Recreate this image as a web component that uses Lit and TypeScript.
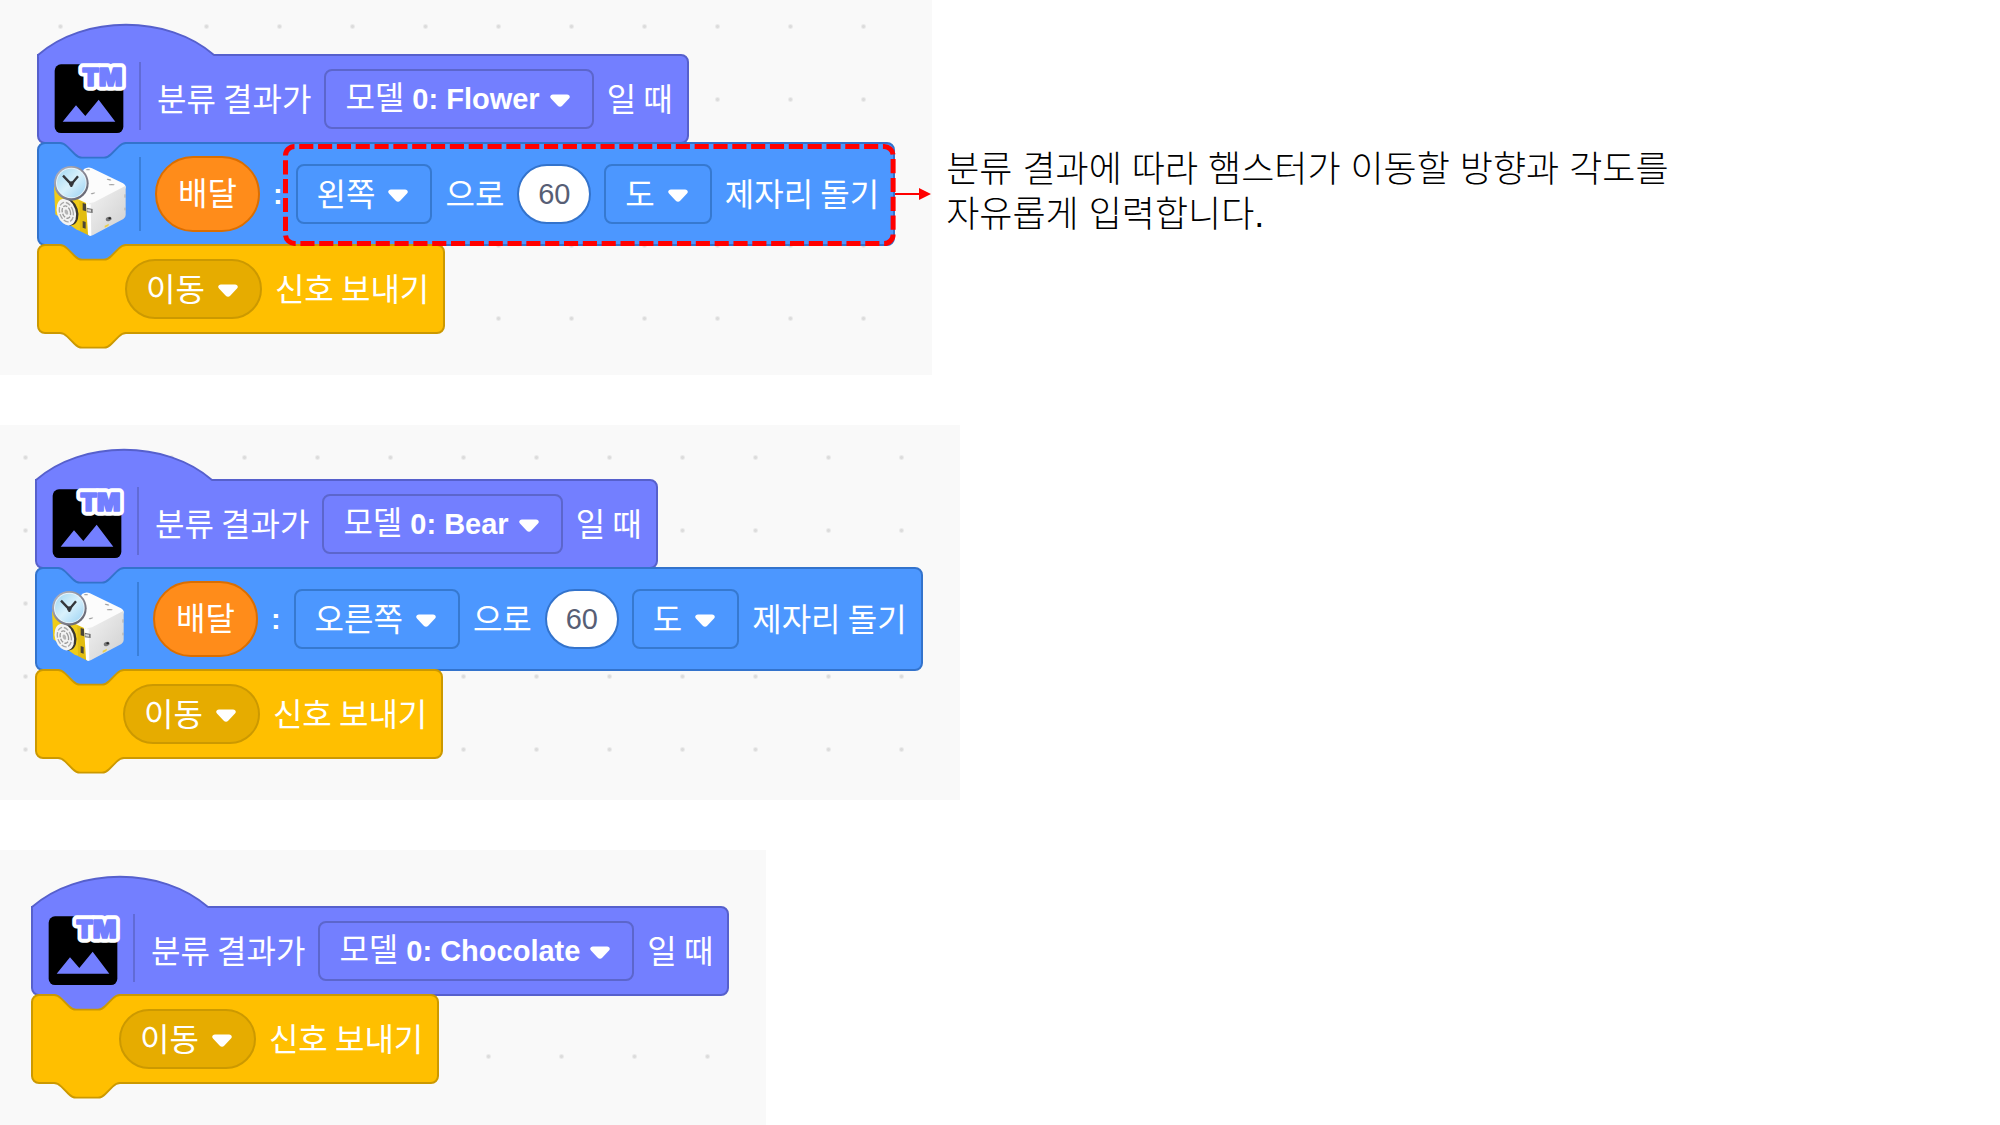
import { LitElement, html, css, nothing, TemplateResult } from "lit";
import { customElement, property, state } from "lit/decorators.js";
import { classMap } from "lit/directives/class-map.js";
import { styleMap } from "lit/directives/style-map.js";

type Tone = "model" | "motion" | "event";

interface Script {
  model: string;
  turn?: string;
  highlighted?: boolean;
  insetLeft: number;
  insetTop: number;
  gridX: number;
  gridY: number;
}

const MODELS = ["Flower", "Bear", "Chocolate"];

const SCRIPTS: Script[] = [
  { model: "Flower", turn: "왼쪽", highlighted: true, insetLeft: 37, insetTop: 54, gridX: 24, gridY: 63 },
  { model: "Bear", turn: "오른쪽", insetLeft: 35, insetTop: 54, gridX: 62, gridY: 69 },
  { model: "Chocolate", insetLeft: 31, insetTop: 56, gridX: 14, gridY: 24 },
];

const CONNECTOR =
  "M12,0 c2,0 3,1 4,2 l4,4 c1,1 2,2 4,2 h12 c2,0 3,-1 4,-2 l4,-4 c1,-1 2,-2 4,-2";

const caret = html`<svg class="caret" viewBox="0 0 20 13" aria-hidden="true">
  <path d="M3,0.5 H17 C19.6,0.5 20.6,2.8 19,4.6 L12.2,11.8 C10.9,13.1 9.1,13.1 7.8,11.8 L1,4.6 C-0.6,2.8 0.4,0.5 3,0.5Z" fill="#fff" />
</svg>`;

const modelIcon = html`<svg class="icon icon-model" viewBox="72 66 216 222" aria-hidden="true">
  <rect x="74" y="73" width="206" height="206" rx="19" fill="#000" />
  <path d="M98,245 L138,196 L166,228 L206,179 L256,245Z" fill="#737fff" />
  <g font-family="Inter, 'Liberation Sans', sans-serif" font-weight="900" font-size="73" stroke-linejoin="round">
    <text x="157" y="137" stroke="#fff" stroke-width="28" fill="#fff">TM</text>
    <text x="157" y="137" fill="#737fff" stroke="#737fff" stroke-width="5">TM</text>
  </g>
</svg>`;

const robotIcon = html`<svg class="icon icon-robot" viewBox="70 330 216 258" aria-hidden="true">
  <defs>
    <linearGradient id="side" x1="0" y1="0" x2="1" y2="1">
      <stop offset="0" stop-color="#f4f4f4" />
      <stop offset="1" stop-color="#cfcfcf" />
    </linearGradient>
    <linearGradient id="rim" x1="0" y1="0" x2="1" y2="1">
      <stop offset="0" stop-color="#b9b9c4" />
      <stop offset="1" stop-color="#5c5c68" />
    </linearGradient>
    <linearGradient id="glass" x1="0" y1="0" x2="1" y2="1">
      <stop offset="0" stop-color="#9fd6f2" />
      <stop offset="0.5" stop-color="#d9f1fc" />
      <stop offset="1" stop-color="#9bd2f3" />
    </linearGradient>
  </defs>
  <path d="M70,436 L166,478 L166,576 L138,566 L74,520Z" fill="#f0cc18" />
  <path d="M146,480 L170,484 L176,584 L148,570Z" fill="#e2bd10" />
  <path d="M160,384 Q172,376 184,382 L277,427 Q286,432 285,442 L188,490 Q176,494 166,486 L120,464Z" fill="#fcfcfc" />
  <path d="M172,490 Q176,486 190,484 L285,434 V522 Q285,530 278,534 L186,583 Q176,587 172,580Z" fill="url(#side)" />
  <path d="M166,484 Q172,492 180,490 L182,584 Q176,586 172,580Z" fill="#fff" />
  <g fill="#a2a2a2">
    <ellipse cx="235" cy="416" rx="7" ry="2" transform="rotate(14 235 416)" />
    <ellipse cx="243" cy="431" rx="9" ry="2" />
    <ellipse cx="187" cy="457" rx="7" ry="2" transform="rotate(-12 187 457)" />
    <ellipse cx="172" cy="386" rx="6" ry="2" />
  </g>
  <path d="M156,486 l10,3 v22 l-10,-3Z M156,540 l9,3 v20 l-9,-3Z" fill="#4a4537" />
  <path d="M168,500 l18,4 v12 l-18,-2Z" fill="#777" />
  <path d="M170,504 l11,2 v6 l-11,-1Z" fill="#ddd" />
  <ellipse cx="234" cy="534" rx="9" ry="6" fill="#777" transform="rotate(-20 234 534)" />
  <ellipse cx="237" cy="532" rx="4" ry="3" fill="#222" />
  <path d="M222,554 l13,-6 l-2,7 l-11,5Z" fill="#e8cf4a" />
  <path d="M283,460 v10 M283,500 v8" stroke="#aaa" stroke-width="3" />
  <g transform="rotate(-18 108 513)">
    <ellipse cx="113" cy="514" rx="29" ry="42" fill="#3a372f" />
    <ellipse cx="107" cy="513" rx="28" ry="41" fill="#f3f3f3" />
    <ellipse cx="107" cy="513" rx="20" ry="30" fill="none" stroke="#a9a9a9" stroke-width="4" stroke-dasharray="16 5" />
    <ellipse cx="107" cy="513" rx="12" ry="19" fill="none" stroke="#9a9a9a" stroke-width="4" stroke-dasharray="13 4" />
    <ellipse cx="107" cy="513" rx="5" ry="8" fill="#b5b5b5" />
  </g>
  <circle cx="122" cy="427" r="52" fill="url(#rim)" />
  <circle cx="122" cy="426" r="46" fill="#e8f4fb" />
  <circle cx="122" cy="426" r="43" fill="url(#glass)" />
  <path d="M97,404 L122,430 L142,406" fill="none" stroke="#34363a" stroke-width="7" stroke-linejoin="round" />
  <path d="M122,426 V438" stroke="#34363a" stroke-width="6" />
  <circle cx="122" cy="428" r="7" fill="#34363a" />
</svg>`;

@customElement("block-menu")
export class BlockMenu extends LitElement {
  @property() label = "";
  @property() value = "";
  @property() prefix = "";
  @property({ type: Boolean }) round = false;
  @property({ attribute: false }) options: string[] = [];

  static styles = css`
    :host {
      display: block;
    }
    .menu {
      position: relative;
      display: flex;
      align-items: center;
      height: 60px;
      color: #fff;
    }
    .select {
      appearance: none;
      box-sizing: border-box;
      field-sizing: content;
      height: 60px;
      margin: 0;
      padding: 0 55px 5px 19px;
      border: 2px solid var(--line);
      border-radius: 8px;
      background: var(--field, transparent);
      color: inherit;
      font: 32px "Noto Sans CJK KR", sans-serif;
      cursor: pointer;
    }
    .select option {
      color: #222;
    }
    .round .select {
      border-radius: 30px;
    }
    .rich .select {
      position: absolute;
      inset: 0;
      width: 100%;
      color: transparent;
    }
    .value {
      display: flex;
      align-items: baseline;
      padding: 0 54px 4px 21px;
      font: bold 29px/56px "Liberation Sans", sans-serif;
      white-space: pre;
      pointer-events: none;
    }
    .prefix {
      font: 32px/56px "Noto Sans CJK KR", sans-serif;
    }
    .caret {
      position: absolute;
      right: 24px;
      width: 20px;
      height: 13px;
      margin-top: 3px;
      pointer-events: none;
    }
  `;

  private pick(e: Event) {
    this.value = (e.target as HTMLSelectElement).value;
  }

  render() {
    const rich = this.prefix !== "";
    return html`<div class=${classMap({ menu: true, rich, round: this.round })}>
      <select class="select" aria-label=${this.label} @change=${this.pick}>
        ${this.options.map(
          (o) => html`<option value=${o} ?selected=${o === this.value}>${rich ? `${this.prefix} 0: ${o}` : o}</option>`
        )}
      </select>
      ${rich
        ? html`<span class="value" aria-hidden="true"><span class="prefix">${this.prefix}</span> 0: ${this.value}</span>`
        : nothing}
      ${caret}
    </div>`;
  }
}

@customElement("app-root")
export class AppRoot extends LitElement {
  @state() private scripts = SCRIPTS;

  static styles = css`
    :host {
      display: block;
      min-height: 100vh;
      background: #fff;
    }
    .page {
      display: flex;
      flex-direction: column;
      gap: 50px;
    }
    .row {
      display: flex;
      align-items: flex-start;
    }
    .panel {
      padding: 0 37px 41px 0;
      background-color: #f9f9f9;
      background-image: radial-gradient(circle at center, #dcdcdc 1px, transparent 3px);
      background-size: 73px 73px;
    }
    .stack {
      display: flex;
      flex-direction: column;
      align-items: flex-start;
    }
    .block {
      position: relative;
      box-sizing: border-box;
      display: flex;
      align-items: center;
      gap: 13px;
      min-height: 90px;
      padding: 0 14px 0 15px;
      border: 2px solid var(--edge);
      border-radius: 8px;
      background: var(--fill);
      color: #fff;
      font: 32px/40px "Noto Sans CJK KR", sans-serif;
      white-space: nowrap;
    }
    .block + .block {
      margin-top: -2px;
    }
    .model {
      --fill: #737fff;
      --edge: #5660cc;
      --line: #5c66cc;
      border-top-left-radius: 0;
    }
    .motion {
      --fill: #4c97ff;
      --edge: #3373cc;
      --line: #3679d0;
      min-height: 104px;
    }
    .event {
      --fill: #ffbf00;
      --edge: #cc9900;
      --line: #cc9900;
      --field: #e6ac00;
      padding-left: 86px;
    }
    .shape {
      position: absolute;
      left: -1px;
      width: 176px;
      height: 22px;
      overflow: visible;
      pointer-events: none;
    }
    .shape-top {
      top: -1px;
    }
    .shape-bottom {
      top: calc(100% + 1px);
    }
    .outline {
      fill: none;
      stroke: var(--edge);
      stroke-width: 1;
    }
    .own {
      fill: var(--fill);
    }
    .from-model {
      fill: #737fff;
    }
    .from-motion {
      fill: #4c97ff;
    }
    .icon {
      flex: none;
      width: 72px;
      overflow: visible;
    }
    .icon-model {
      height: 74px;
    }
    .icon-robot {
      height: 86px;
    }
    .rule {
      width: 2px;
      height: 74px;
      margin-right: 1px;
      background: var(--line);
      opacity: 0.8;
    }
    .model .rule {
      height: 68px;
      margin: 0 3px 6px 0;
    }
    .text {
      padding-bottom: 5px;
    }
    .colon {
      font: bold 29px/40px "Liberation Sans", sans-serif;
    }
    .variable {
      box-sizing: border-box;
      height: 76px;
      padding: 0 21px;
      border: 2px solid #db6e00;
      border-radius: 38px;
      background: #ff8c1a;
      line-height: 67px;
    }
    .group {
      position: relative;
      display: flex;
      align-items: center;
      gap: 13px;
    }
    .number {
      box-sizing: border-box;
      width: 74px;
      height: 60px;
      margin: 0;
      padding: 0;
      border: 2px solid #3373cc;
      border-radius: 30px;
      background: #fff;
      color: #575e75;
      font: 29px "Liberation Sans", sans-serif;
      text-align: center;
    }
    .marker {
      position: absolute;
      z-index: 2;
      top: -20px;
      left: -13px;
      width: calc(100% + 29px);
      height: 102px;
      overflow: visible;
      pointer-events: none;
    }
    .marker-box {
      width: calc(100% - 5px);
      height: calc(100% - 5px);
      fill: none;
      stroke: #f00;
      stroke-width: 5;
    }
    .arrow {
      position: absolute;
      z-index: 2;
      top: 24px;
      left: calc(100% + 16px);
      width: 36px;
      height: 12px;
      pointer-events: none;
    }
    .note {
      margin: 0;
      padding: 147px 16px 0 14px;
      color: #000;
      font: 300 36px/45px "Liberation Sans", "Noto Sans CJK KR", sans-serif;
    }
  `;

  private notch(from: Tone) {
    return html`<svg class="shape shape-top" viewBox="0 0 96 12" aria-hidden="true">
      <path class="from-${from}" d="${CONNECTOR} L47,-0.7 H13Z" />
      <path class="outline" d=${CONNECTOR} />
    </svg>`;
  }

  private hatBlock(s: Script) {
    return html`<div class="block model">
      <svg class="shape shape-top" viewBox="0 0 96 12" aria-hidden="true">
        <path class="own" d="M0.4,1 V0 C25,-22 71,-22 96,0 L95,1Z" />
        <path class="outline" d="M0,0.6 V0 C25,-22 71,-22 96,0" />
      </svg>
      ${modelIcon}
      <span class="rule"></span>
      <span class="text">분류 결과가</span>
      <block-menu label="분류 모델" prefix="모델" .value=${s.model} .options=${MODELS}></block-menu>
      <span class="text">일 때</span>
    </div>`;
  }

  private turnBlock(s: Script) {
    return html`<div class="block motion">
      ${this.notch("model")} ${robotIcon}
      <span class="rule"></span>
      <span class="variable">배달</span>
      <span class="colon">:</span>
      <div class="group">
        <block-menu label="방향" .value=${s.turn!} .options=${["왼쪽", "오른쪽"]}></block-menu>
        <span class="text">으로</span>
        <input class="number" type="text" inputmode="numeric" aria-label="각도" value="60" />
        <block-menu label="단위" .value=${"도"} .options=${["도"]}></block-menu>
        <span class="text">제자리 돌기</span>
        ${s.highlighted
          ? html`<svg class="marker" aria-hidden="true">
                <rect class="marker-box" x="2.5" y="2.5" rx="9" pathLength="296" stroke-dasharray="3 1" stroke-dashoffset="3" />
              </svg>
              <svg class="arrow" viewBox="0 0 36 12" aria-hidden="true">
                <path d="M0,5 H24 V0 L36,6 L24,12 V7 H0Z" fill="#f00" />
              </svg>`
          : nothing}
      </div>
    </div>`;
  }

  private signalBlock(after: Tone) {
    return html`<div class="block event">
      ${this.notch(after)}
      <svg class="shape shape-bottom" viewBox="0 0 96 12" aria-hidden="true">
        <path class="own" d="${CONNECTOR} L47,-0.7 H13Z" />
        <path class="outline" d=${CONNECTOR} />
      </svg>
      <block-menu label="신호" round .value=${"이동"} .options=${["이동"]}></block-menu>
      <span class="text">신호 보내기</span>
    </div>`;
  }

  private panel(s: Script): TemplateResult {
    const place = {
      paddingLeft: `${s.insetLeft}px`,
      paddingTop: `${s.insetTop}px`,
      backgroundPosition: `${s.gridX}px ${s.gridY}px`,
    };
    return html`<section class="panel" style=${styleMap(place)}>
      <div class="stack">
        ${this.hatBlock(s)} ${s.turn ? this.turnBlock(s) : nothing}
        ${this.signalBlock(s.turn ? "motion" : "model")}
      </div>
    </section>`;
  }

  render() {
    return html`<main class="page">
      ${this.scripts.map(
        (s) => html`<div class="row">
          ${this.panel(s)}
          ${s.highlighted
            ? html`<p class="note">분류 결과에 따라 햄스터가 이동할 방향과 각도를<br />자유롭게 입력합니다.</p>`
            : nothing}
        </div>`
      )}
    </main>`;
  }
}
